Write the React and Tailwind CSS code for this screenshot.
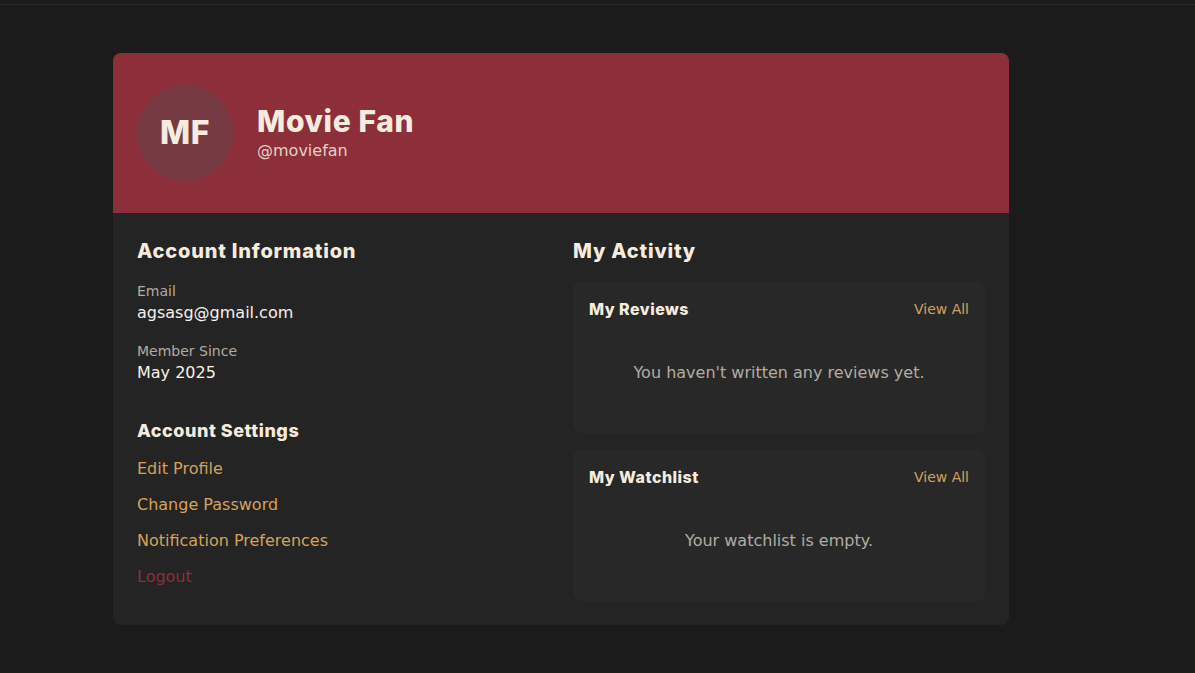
import React from 'react';

const heading = { fontFamily: '"Inter", "Noto Sans", sans-serif' };

function ActivityCard({ title, empty }) {
  return (
    <div className="rounded-lg bg-[#282828] p-4">
      <div className="mb-4 flex h-6 items-center justify-between">
        <h3 className="text-base font-extrabold tracking-[0.03em] text-[#f5ecdf]" style={heading}>{title}</h3>
        <a href="#" className="text-sm text-[#d6a15a]">View All</a>
      </div>
      <p className="pt-6 pb-8 text-center text-base leading-6 text-[#b3aca3]">{empty}</p>
    </div>
  );
}

function App() {
  const settings = ['Edit Profile', 'Change Password', 'Notification Preferences'];

  return (
    <div
      className="min-h-screen bg-[#1b1b1b] text-[#f5ecdf]"
      style={{ fontFamily: '"DejaVu Sans", "Noto Sans", sans-serif' }}
    >
      <div className="h-[5px] border-b border-[#2a2a2a]" />

      <main className="py-12 pl-[113px]">
        <div className="w-[896px] overflow-hidden rounded-lg bg-[#242424]">
          {/* Header */}
          <div className="flex h-[160px] items-center gap-6 bg-[#8c2f39] px-6">
            <div className="flex h-24 w-24 items-center justify-center rounded-full bg-[#763b42]">
              <span className="text-[32px] font-extrabold tracking-[0.02em] text-[#f5ecdf]" style={heading}>MF</span>
            </div>
            <div>
              <h1 className="text-[30px] font-extrabold leading-9 tracking-[0.02em] text-[#f5ecdf]" style={heading}>Movie Fan</h1>
              <p className="text-base text-[#e6cfc8]">@moviefan</p>
            </div>
          </div>

          {/* Body */}
          <div className="grid grid-cols-2 gap-6 p-6">
            <div>
              <h2 className="mb-[17px] text-xl font-extrabold leading-7 tracking-[0.04em]" style={heading}>Account Information</h2>
              <div className="mb-[17px]">
                <p className="text-sm leading-[19px] text-[#b3aca3]">Email</p>
                <p className="text-base leading-6 text-[#f7f1ea]">agsasg@gmail.com</p>
              </div>
              <div>
                <p className="text-sm leading-[19px] text-[#b3aca3]">Member Since</p>
                <p className="text-base leading-6 text-[#f7f1ea]">May 2025</p>
              </div>

              <h2 className="mt-8 mb-3 text-lg font-extrabold leading-7 tracking-[0.03em]" style={heading}>Account Settings</h2>
              <ul className="flex flex-col gap-3">
                {settings.map((s) => (
                  <li key={s}>
                    <a href="#" className="text-base leading-6 text-[#d6a15a]">{s}</a>
                  </li>
                ))}
                <li>
                  <button className="text-base leading-6 text-[#8c2f39]">Logout</button>
                </li>
              </ul>
            </div>

            <div>
              <h2 className="mb-4 text-xl font-extrabold leading-7 tracking-[0.04em]" style={heading}>My Activity</h2>
              <div className="flex flex-col gap-4">
                <ActivityCard title="My Reviews" empty="You haven't written any reviews yet." />
                <ActivityCard title="My Watchlist" empty="Your watchlist is empty." />
              </div>
            </div>
          </div>
        </div>
      </main>
    </div>
  );
}

export default App;
